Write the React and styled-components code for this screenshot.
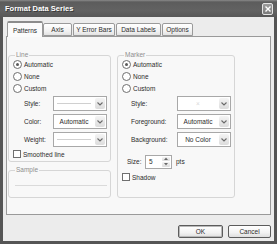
import React from "react";
import styled, { createGlobalStyle } from "styled-components";

const GlobalStyle = createGlobalStyle`
  html, body {
    margin: 0;
    padding: 0;
    background: #ffffff;
  }
  body {
    font-family: "Liberation Sans", Arial, sans-serif;
    font-size: 6.5px;
    color: #2c2c2c;
  }
`;

const Window = styled.div`
  width: 277px;
  height: 244px;
  box-sizing: border-box;
  display: flex;
  flex-direction: column;
  padding: 0 3px 3px;
  background: #555555;
`;

const TitleBar = styled.div`
  height: 17px;
  margin: 0 -3px;
  padding: 0 4px 0 5px;
  display: flex;
  align-items: center;
  justify-content: space-between;
  background: linear-gradient(#8a8a8a 0, #5c5c5c 2px, #626262 60%, #575757 100%);
`;

const Title = styled.span`
  font-weight: 700;
  font-size: 7.5px;
  color: #ffffff;
  text-shadow: 1px 1px 0 #3a3a3a;
`;

const CloseButton = styled.div`
  width: 11px;
  height: 12px;
  box-sizing: border-box;
  border: 1px solid #e4e4e4;
  border-radius: 2px;
  background: linear-gradient(#9c9c9c, #7c7c7c);
  display: grid;
  place-items: center;
`;

const Body = styled.div`
  flex: 1;
  display: flex;
  flex-direction: column;
  padding: 4px 3px 0;
  background: #ececec;
`;

const TabRow = styled.div`
  display: flex;
  align-items: flex-end;
  height: 15px;
  padding-left: 1px;
  position: relative;
  z-index: 1;
`;

const Tab = styled.div`
  box-sizing: border-box;
  width: ${(p) => p.$w}px;
  height: ${(p) => (p.$active ? 16 : 13)}px;
  margin-bottom: ${(p) => (p.$active ? -1 : 0)}px;
  margin-left: ${(p) => (p.$active ? 0 : 1)}px;
  margin-right: ${(p) => (p.$active ? -1 : 0)}px;
  display: flex;
  align-items: center;
  justify-content: center;
  border: 1px solid #9a9a9a;
  border-bottom: ${(p) => (p.$active ? "none" : "1px solid #9a9a9a")};
  border-top: ${(p) => (p.$active ? "2px solid #8c8c8c" : "1px solid #9a9a9a")};
  border-radius: 2px 2px 0 0;
  background: ${(p) =>
    p.$active ? "#fbfbfb" : "linear-gradient(#ffffff, #f0f0f0 70%, #e2e2e2)"};
  white-space: nowrap;
`;

const Panel = styled.div`
  flex: 1;
  box-sizing: border-box;
  border: 1px solid #9a9a9a;
  background: #f8f8f8;
  padding: 14px 2px 0 1px;
  display: grid;
  grid-template-columns: 103px 118px;
  column-gap: 6px;
  align-content: start;
  height: 179px;
`;

const Column = styled.div`
  display: flex;
  flex-direction: column;
  gap: 4px;
`;

const Group = styled.fieldset`
  margin: 0;
  padding: 0 2px ${(p) => p.$pb || 0}px 4px;
  border: 1px solid #d6d6d6;
  border-radius: 3px;
  display: flex;
  flex-direction: column;
  gap: 2px;
  flex: ${(p) => (p.$grow ? 1 : "none")};
  min-width: 0;
`;

const Legend = styled.legend`
  padding: 0 1px;
  margin-left: 2px;
  line-height: 8px;
  color: #8e8e8e;
`;

const OptionRow = styled.div`
  height: 10px;
  display: flex;
  align-items: center;
  gap: 2px;
  margin-top: ${(p) => p.$mt || 0}px;
`;

const Radio = styled.span`
  width: 9px;
  height: 9px;
  box-sizing: border-box;
  border-radius: 50%;
  border: 1px solid #6f6f6f;
  background: #ffffff;
  display: grid;
  place-items: center;
  &::after {
    content: "";
    width: 3px;
    height: 3px;
    border-radius: 50%;
    background: ${(p) => (p.$checked ? "#5a5a5a" : "transparent")};
  }
`;

const Check = styled.span`
  width: 8px;
  height: 8px;
  box-sizing: border-box;
  border: 1px solid #6f6f6f;
  background: #ffffff;
`;

const FieldRow = styled.div`
  height: 15px;
  margin-top: ${(p) => (p.$mt === undefined ? 1 : p.$mt)}px;
  display: flex;
  align-items: center;
  padding-left: ${(p) => p.$pl || 0}px;
`;

const Label = styled.span`
  width: ${(p) => p.$w}px;
  flex: none;
`;

const Select = styled.div`
  width: ${(p) => p.$w || 54}px;
  height: 15px;
  box-sizing: border-box;
  border: 1px solid #a8a8a8;
  background: #ffffff;
  display: flex;
  align-items: stretch;
  padding: 1px;
`;

const SelectValue = styled.div`
  flex: 1;
  display: flex;
  align-items: center;
  justify-content: center;
  padding-right: 2px;
`;

const PreviewLine = styled.div`
  width: 34px;
  height: 1px;
  background: #d0d0d0;
`;

const MarkerPreview = styled.span`
  color: #d8d8d8;
`;

const DropButton = styled.div`
  width: 10px;
  border-radius: 2px;
  background: linear-gradient(#f4f4f4, #dcdcdc);
  display: grid;
  place-items: center;
`;

const Spin = styled.div`
  width: 27px;
  height: 14px;
  box-sizing: border-box;
  border: 1px solid #a8a8a8;
  background: #ffffff;
  display: flex;
  align-items: stretch;
  padding: 1px;
  margin: 0 4px 0 0;
`;

const SpinValue = styled.div`
  flex: 1;
  display: flex;
  align-items: center;
  padding-left: 2px;
`;

const SpinButtons = styled.div`
  width: 8px;
  display: flex;
  flex-direction: column;
  gap: 1px;
  & > div {
    flex: 1;
    border-radius: 1px;
    background: linear-gradient(#f4f4f4, #dcdcdc);
    display: grid;
    place-items: center;
  }
`;

const SampleArea = styled.div`
  height: 23px;
  display: flex;
  align-items: center;
  justify-content: center;
`;

const SampleLine = styled.div`
  width: 92px;
  height: 1px;
  background: #dadada;
`;

const Footer = styled.div`
  display: flex;
  justify-content: flex-end;
  gap: 5px;
  padding: 10px 0 3px;
`;

const Button = styled.div`
  width: ${(p) => p.$w}px;
  height: 13px;
  box-sizing: border-box;
  border: 1px solid #5c5c5c;
  border-radius: 2px;
  background: linear-gradient(#ffffff, #f2f2f2 60%, #dedede);
  display: grid;
  place-items: center;
  box-shadow: ${(p) => (p.$default ? "inset 0 0 0 1px #b8b8b8" : "none")};
`;

const Chevron = () => (
  <svg width="6" height="4" viewBox="0 0 6 4">
    <path d="M0.5 0.5 L3 3 L5.5 0.5" fill="none" stroke="#6a6a6a" strokeWidth="1.1" />
  </svg>
);

const Arrow = ({ up }) => (
  <svg width="4" height="3" viewBox="0 0 4 3">
    <path d={up ? "M0 3 L2 0.5 L4 3 Z" : "M0 0 L2 2.5 L4 0 Z"} fill="#6a6a6a" />
  </svg>
);

const Dropdown = ({ children, w }) => (
  <Select $w={w}>
    <SelectValue>{children}</SelectValue>
    <DropButton>
      <Chevron />
    </DropButton>
  </Select>
);

const tabs = [
  { name: "Patterns", w: 36, active: true },
  { name: "Axis", w: 29 },
  { name: "Y Error Bars", w: 42 },
  { name: "Data Labels", w: 45 },
  { name: "Options", w: 31 },
];

export default function App() {
  return (
    <>
      <GlobalStyle />
      <Window>
        <TitleBar>
          <Title>Format Data Series</Title>
          <CloseButton>
            <svg width="6" height="6" viewBox="0 0 6 6">
              <path d="M0.5 0.5 L5.5 5.5 M5.5 0.5 L0.5 5.5" stroke="#fff" strokeWidth="1.4" />
            </svg>
          </CloseButton>
        </TitleBar>
        <Body>
          <TabRow>
            {tabs.map((t) => (
              <Tab key={t.name} $w={t.w} $active={t.active}>
                {t.name}
              </Tab>
            ))}
          </TabRow>
          <Panel>
            <Column>
              <Group $pb={2}>
                <Legend>Line</Legend>
                <OptionRow>
                  <Radio $checked /> Automatic
                </OptionRow>
                <OptionRow>
                  <Radio /> None
                </OptionRow>
                <OptionRow>
                  <Radio /> Custom
                </OptionRow>
                <FieldRow $pl={11}>
                  <Label $w={29}>Style:</Label>
                  <Dropdown>
                    <PreviewLine />
                  </Dropdown>
                </FieldRow>
                <FieldRow $pl={11}>
                  <Label $w={29}>Color:</Label>
                  <Dropdown>Automatic</Dropdown>
                </FieldRow>
                <FieldRow $pl={11}>
                  <Label $w={29}>Weight:</Label>
                  <Dropdown>
                    <PreviewLine />
                  </Dropdown>
                </FieldRow>
                <OptionRow>
                  <Check /> Smoothed line
                </OptionRow>
              </Group>
              <Group>
                <Legend>Sample</Legend>
                <SampleArea>
                  <SampleLine />
                </SampleArea>
              </Group>
            </Column>
            <Group $grow>
              <Legend>Marker</Legend>
              <OptionRow>
                <Radio $checked /> Automatic
              </OptionRow>
              <OptionRow>
                <Radio /> None
              </OptionRow>
              <OptionRow>
                <Radio /> Custom
              </OptionRow>
              <FieldRow $pl={9}>
                <Label $w={46}>Style:</Label>
                <Dropdown>
                  <MarkerPreview>×</MarkerPreview>
                </Dropdown>
              </FieldRow>
              <FieldRow $pl={9}>
                <Label $w={46}>Foreground:</Label>
                <Dropdown>Automatic</Dropdown>
              </FieldRow>
              <FieldRow $pl={9}>
                <Label $w={46}>Background:</Label>
                <Dropdown>No Color</Dropdown>
              </FieldRow>
              <FieldRow $pl={5} $mt={5}>
                <Label $w={18}>Size:</Label>
                <Spin>
                  <SpinValue>5</SpinValue>
                  <SpinButtons>
                    <div>
                      <Arrow up />
                    </div>
                    <div>
                      <Arrow />
                    </div>
                  </SpinButtons>
                </Spin>
                pts
              </FieldRow>
              <OptionRow $mt={1}>
                <Check /> Shadow
              </OptionRow>
            </Group>
          </Panel>
          <Footer>
            <Button $w={45} $default>
              OK
            </Button>
            <Button $w={43}>Cancel</Button>
          </Footer>
        </Body>
      </Window>
    </>
  );
}
